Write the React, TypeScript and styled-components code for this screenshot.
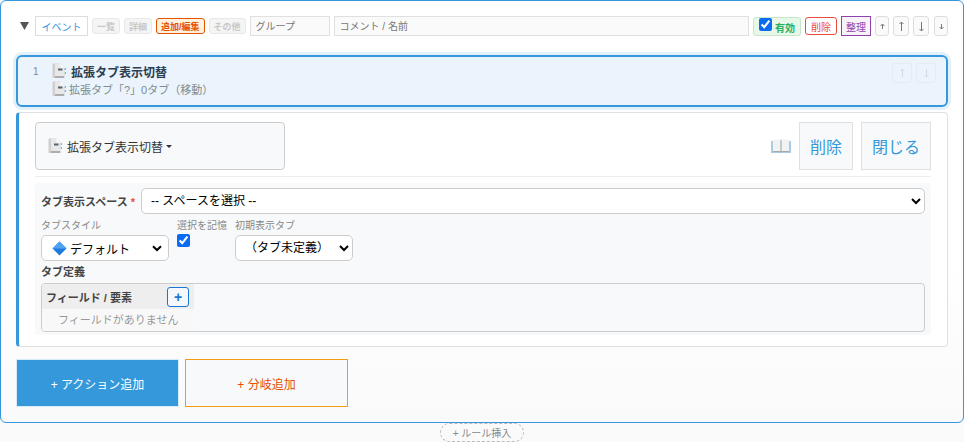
import React from 'react'
import styled, { createGlobalStyle } from 'styled-components'

const GlobalStyle = createGlobalStyle`
  html, body {
    margin: 0;
    padding: 0;
    background: #fafafa;
    font-family: "Liberation Sans", "Noto Sans CJK JP", sans-serif;
    color: #2c3e50;
  }
  * { box-sizing: border-box; }
`

const Rule = styled.div`
  height: 423px;
  background: linear-gradient(#fff 0, #fff 60%, #fafafa 100%);
  border: 1px solid #3498db;
  border-radius: 6px;
  padding: 15px 15px 0 15px;
`

const Header = styled.div`
  display: flex;
  align-items: center;
  height: 20px;
  gap: 4px;
`

const Toggle = styled.span`
  width: 9px;
  height: 8px;
  margin: 0 2px 0 4px;
  background: #555;
  clip-path: polygon(0 0, 100% 0, 50% 100%);
`

const EventTag = styled.span`
  width: 53px;
  height: 20px;
  flex: none;
  display: flex;
  align-items: center;
  justify-content: center;
  border: 1px solid #ddd;
  background: #fff;
  color: #3498db;
  font-size: 10px;
`

const Chip = styled.button<{ $active?: boolean }>`
  height: 16px;
  padding: 0 4px;
  flex: none;
  display: flex;
  align-items: center;
  justify-content: center;
  white-space: nowrap;
  font: inherit;
  font-size: 9px;
  font-weight: 700;
  border-radius: 3px;
  border: 1px solid ${p => (p.$active ? '#e65100' : '#e8e8e8')};
  background: ${p => (p.$active ? '#fff3e0' : '#f5f5f5')};
  color: ${p => (p.$active ? '#e65100' : '#c8c8c8')};
`

const HeaderInput = styled.input<{ $grow?: boolean }>`
  height: 20px;
  width: ${p => (p.$grow ? 'auto' : '80px')};
  flex: ${p => (p.$grow ? '1' : 'none')};
  min-width: 0;
  padding: 0 5px;
  border: 1px solid #e0e0e0;
  background: #fafafa;
  font: inherit;
  font-size: 10px;
  &::placeholder { color: #777; opacity: 1; }
`

const Enabled = styled.label`
  height: 19px;
  width: 48px;
  flex: none;
  margin-top: 1px;
  display: flex;
  align-items: center;
  border: 1px solid #c8e6c9;
  border-radius: 3px;
  background: #e8f8e8;
  color: #27ae60;
  font-size: 10px;
  font-weight: 700;
  position: relative;
  padding: 1px 0 0 21px;
  input {
    position: absolute;
    left: 5px;
    top: 0;
    width: 13px;
    height: 13px;
    margin: 0;
    accent-color: #0a6cf5;
  }
`

const DangerChip = styled.button`
  width: 32px;
  height: 18px;
  flex: none;
  padding: 0;
  font: inherit;
  font-size: 10px;
  background: #fff;
  border: 1px solid #e74c3c;
  border-radius: 3px;
  color: #e74c3c;
`

const PurpleChip = styled.button`
  width: 30px;
  height: 20px;
  flex: none;
  padding: 0;
  font: inherit;
  font-size: 10px;
  background: #f8f2fb;
  border: 1px solid #8e44ad;
  color: #8e44ad;
`

const MoveButton = styled.button<{ $wide?: boolean }>`
  width: ${p => (p.$wide ? '16px' : '14px')};
  height: 20px;
  flex: none;
  padding: 0;
  display: flex;
  align-items: center;
  justify-content: center;
  background: #fafafa;
  border: 1px solid #ddd;
  border-radius: 3px;
  color: #777;
  &:last-child { margin-left: 1px; }
`

const ActionRow = styled.div`
  margin-top: 19px;
  height: 52px;
  display: flex;
  border: 2px solid #3498db;
  border-radius: 6px;
  background: #ebf3fd;
  box-shadow: 0 0 0 3px rgba(52, 152, 219, 0.15);
  padding: 0 10px 0 15px;
`

const RowNumber = styled.span`
  width: 19px;
  padding-top: 9px;
  font-size: 10px;
  color: #888;
`

const RowBody = styled.div`
  flex: 1;
  padding-top: 6px;
`

const RowTitle = styled.div`
  display: flex;
  align-items: center;
  gap: 5px;
  height: 16px;
  font-size: 12px;
  font-weight: 700;
  color: #2c3e50;
`

const RowSub = styled.div`
  display: flex;
  align-items: center;
  gap: 3px;
  height: 16px;
  margin-top: 2px;
  font-size: 11px;
  color: #7f8c8d;
`

const RowMoves = styled.div`
  display: flex;
  gap: 4px;
  padding-top: 6px;
`

const FaintMove = styled.button`
  width: 20px;
  height: 20px;
  padding: 0;
  display: flex;
  align-items: center;
  justify-content: center;
  background: #edf3fc;
  border: 1px solid #e3ebf6;
  border-radius: 3px;
  color: #d4dae2;
`

const EditPanel = styled.div`
  margin-top: 5px;
  height: 235px;
  background: #fff;
  border: 1px solid #e0e0e0;
  border-left: 3px solid #3498db;
  border-radius: 4px;
  padding: 9px 16px 0 16px;
`

const PanelTop = styled.div`
  display: flex;
  align-items: center;
  height: 48px;
  gap: 8px;
`

const ActionPicker = styled.button`
  width: 250px;
  height: 48px;
  margin-right: auto;
  display: flex;
  align-items: center;
  gap: 5px;
  padding: 0 0 0 12px;
  font: inherit;
  font-size: 12px;
  color: #333;
  background: #f8f9fa;
  border: 1px solid #ccc;
  border-radius: 4px;
`

const Caret = styled.span`
  width: 0;
  height: 0;
  margin-left: -2px;
  border-left: 3.5px solid transparent;
  border-right: 3.5px solid transparent;
  border-top: 3.5px solid #333;
`

const PanelButton = styled.button<{ $w: number }>`
  width: ${p => p.$w}px;
  height: 48px;
  padding: 0;
  font: inherit;
  font-size: 16px;
  color: #3498db;
  background: #f8f9fa;
  border: 1px solid #e0e0e0;
`

const Divider = styled.div`
  height: 1px;
  background: #eee;
  margin-top: 6px;
`

const Form = styled.div`
  height: 152px;
  margin-top: 6px;
  background: #f8f9fa;
  border-radius: 3px;
  padding: 5px 6px;
`

const SpaceRow = styled.div`
  display: flex;
  align-items: center;
  height: 26px;
`

const BoldLabel = styled.span`
  font-size: 11px;
  font-weight: 700;
  color: #444;
  em {
    color: #e74c3c;
    font-style: normal;
    margin-left: 3px;
  }
`

const SpaceLabel = styled(BoldLabel)`
  width: 100px;
  flex: none;
  white-space: nowrap;
`

const Select = styled.select<{ $w?: number }>`
  flex: ${p => (p.$w ? 'none' : '1')};
  width: ${p => (p.$w ? `${p.$w}px` : 'auto')};
  height: 26px;
  min-width: 0;
  padding: 0 5px;
  font: inherit;
  font-size: 12px;
  color: #000;
  background: #fff;
  border: 1px solid #ccc;
  border-radius: 5px;
`

const OptionsRow = styled.div`
  display: flex;
  gap: 8px;
  margin-top: 4px;
`

const Field = styled.div<{ $w: number }>`
  width: ${p => p.$w}px;
  display: flex;
  flex-direction: column;
  align-items: flex-start;
`

const SmallLabel = styled.span<{ $tight?: boolean }>`
  height: 15px;
  line-height: 15px;
  margin-bottom: ${p => (p.$tight ? '1px' : '2px')};
  font-size: 10px;
  color: #888;
  white-space: nowrap;
`

const FakeSelect = styled.div`
  width: 128px;
  height: 26px;
  display: flex;
  align-items: center;
  gap: 3px;
  padding: 0 6px 0 10px;
  font-size: 12px;
  color: #000;
  background: #fff;
  border: 1px solid #ccc;
  border-radius: 5px;
  svg:last-child { margin-left: auto; }
`

const Remember = styled.input`
  width: 13px;
  height: 13px;
  margin: 0;
  accent-color: #0a6cf5;
`

const TabsLabel = styled(BoldLabel)`
  display: block;
  margin-top: 4px;
  height: 14px;
  line-height: 14px;
`

const TabsBox = styled.div`
  margin-top: 4px;
  height: 49px;
  width: 884px;
  border: 1px solid #ccc;
  border-radius: 4px;
  overflow: hidden;
`

const TabsColumn = styled.div`
  width: 152px;
`

const TabsHead = styled.div`
  height: 25px;
  background: #eee;
  display: flex;
  align-items: center;
  justify-content: space-between;
  padding: 0 5px 0 4px;
  font-size: 11px;
  font-weight: 700;
  color: #444;
`

const AddField = styled.button`
  width: 22px;
  height: 20px;
  padding: 0;
  display: flex;
  align-items: center;
  justify-content: center;
  background: #f4f8fc;
  border: 1px solid #1976d2;
  border-radius: 3px;
  color: #1976d2;
  font: inherit;
  font-size: 14px;
  font-weight: 700;
`

const EmptyNote = styled.div`
  height: 23px;
  line-height: 23px;
  background: #f8f8f8;
  padding-left: 16px;
  font-size: 11px;
  color: #999;
`

const AddRow = styled.div`
  display: flex;
  gap: 6px;
  margin-top: 12px;
`

const AddButton = styled.button<{ $branch?: boolean }>`
  width: 163px;
  height: 48px;
  padding: 0;
  font: inherit;
  font-size: 12px;
  color: ${p => (p.$branch ? '#e65100' : '#fff')};
  background: ${p => (p.$branch ? '#f8f9fa' : '#3498db')};
  border: 1px solid ${p => (p.$branch ? '#f39c12' : '#d6eaf8')};
`

const InsertWrap = styled.div`
  display: flex;
  justify-content: center;
`

const InsertRule = styled.button`
  width: 84px;
  height: 19px;
  padding: 0;
  font: inherit;
  font-size: 10px;
  color: #888;
  background: #fafafa;
  border: 1px dashed #bbb;
  border-radius: 10px;
`

const DocIcon = () => (
  <svg width="14" height="16" viewBox="0 0 14 16" style={{ flex: 'none' }}>
    <path d="M0.5 0.5h8l4 4v10.5H0.5z" fill="#cfcfcf" />
    <path d="M3 0.5h5.5l4 4V13H3z" fill="#e8e8e8" />
    <path d="M8.5 0.5l4 4h-4z" fill="#fafafa" />
    <rect x="6" y="5.5" width="4.5" height="2" fill="#59636d" />
    <rect x="12.8" y="5" width="1" height="2" fill="#5aa9e6" />
    <rect x="12.8" y="9" width="1" height="2" fill="#5aa9e6" />
    <rect x="3" y="13.5" width="9" height="1" fill="#8a8a8a" />
  </svg>
)

const Arrow = ({ down, h = 8 }: { down?: boolean; h?: number }) => (
  <svg width="7" height={h + 2} viewBox={`0 0 7 ${h + 2}`} fill="none" stroke="currentColor" strokeWidth="1">
    {down ? (
      <path d={`M3.5 1V${h + 1}M1.5 ${h - 1}L3.5 ${h + 1}L5.5 ${h - 1}`} />
    ) : (
      <path d={`M3.5 ${h + 1}V1M1.5 3L3.5 1L5.5 3`} />
    )}
  </svg>
)

const BookIcon = () => (
  <svg width="20" height="14" viewBox="0 0 20 14">
    <path d="M0 2H20V14H0z" fill="#a9cbe3" />
    <path d="M2 0.5H9.6V12H2z" fill="#f2f2f2" />
    <path d="M10.4 0.5H18V12H10.4z" fill="#f2f2f2" />
    <path d="M9.6 0.5h0.8V14h-0.8zM2 12h16v1H2z" fill="#a9a9a9" />
  </svg>
)

const Diamond = () => (
  <svg width="15" height="15" viewBox="0 0 15 15">
    <path d="M7.5 0.5L14.5 7.5L7.5 14.5L0.5 7.5z" fill="#1f7ae0" />
    <path d="M7.5 0.5L14.5 7.5H0.5z" fill="#4fa3f0" />
  </svg>
)

const Chevron = () => (
  <svg width="10" height="7" viewBox="0 0 10 7" fill="none" stroke="#000" strokeWidth="2">
    <path d="M1 1.2L5 5L9 1.2" />
  </svg>
)

export default function App() {
  return (
    <>
      <GlobalStyle />
      <Rule>
        <Header>
          <Toggle />
          <EventTag>イベント</EventTag>
          <Chip>一覧</Chip>
          <Chip>詳細</Chip>
          <Chip $active>追加/編集</Chip>
          <Chip>その他</Chip>
          <HeaderInput placeholder="グループ" />
          <HeaderInput $grow placeholder="コメント / 名前" />
          <Enabled>
            <input type="checkbox" defaultChecked />
            有効
          </Enabled>
          <DangerChip>削除</DangerChip>
          <PurpleChip>整理</PurpleChip>
          <MoveButton><Arrow h={5} /></MoveButton>
          <MoveButton $wide><Arrow h={9} /></MoveButton>
          <MoveButton $wide><Arrow down h={9} /></MoveButton>
          <MoveButton><Arrow down h={5} /></MoveButton>
        </Header>

        <ActionRow>
          <RowNumber>1</RowNumber>
          <RowBody>
            <RowTitle><DocIcon />拡張タブ表示切替</RowTitle>
            <RowSub><DocIcon />拡張タブ「?」0タブ（移動）</RowSub>
          </RowBody>
          <RowMoves>
            <FaintMove><Arrow h={8} /></FaintMove>
            <FaintMove><Arrow down h={8} /></FaintMove>
          </RowMoves>
        </ActionRow>

        <EditPanel>
          <PanelTop>
            <ActionPicker><DocIcon />拡張タブ表示切替<Caret /></ActionPicker>
            <BookIcon />
            <PanelButton $w={54}>削除</PanelButton>
            <PanelButton $w={70}>閉じる</PanelButton>
          </PanelTop>
          <Divider />
          <Form>
            <SpaceRow>
              <SpaceLabel>タブ表示スペース<em>*</em></SpaceLabel>
              <Select><option>-- スペースを選択 --</option></Select>
            </SpaceRow>
            <OptionsRow>
              <Field $w={128}>
                <SmallLabel>タブスタイル</SmallLabel>
                <FakeSelect><Diamond />デフォルト<Chevron /></FakeSelect>
              </Field>
              <Field $w={50}>
                <SmallLabel $tight>選択を記憶</SmallLabel>
                <Remember type="checkbox" defaultChecked />
              </Field>
              <Field $w={118}>
                <SmallLabel>初期表示タブ</SmallLabel>
                <Select $w={118}><option>（タブ未定義）</option></Select>
              </Field>
            </OptionsRow>
            <TabsLabel>タブ定義</TabsLabel>
            <TabsBox>
              <TabsColumn>
                <TabsHead>フィールド / 要素<AddField>+</AddField></TabsHead>
                <EmptyNote>フィールドがありません</EmptyNote>
              </TabsColumn>
            </TabsBox>
          </Form>
        </EditPanel>

        <AddRow>
          <AddButton>+ アクション追加</AddButton>
          <AddButton $branch>+ 分岐追加</AddButton>
        </AddRow>
      </Rule>
      <InsertWrap>
        <InsertRule>+ ルール挿入</InsertRule>
      </InsertWrap>
    </>
  )
}
